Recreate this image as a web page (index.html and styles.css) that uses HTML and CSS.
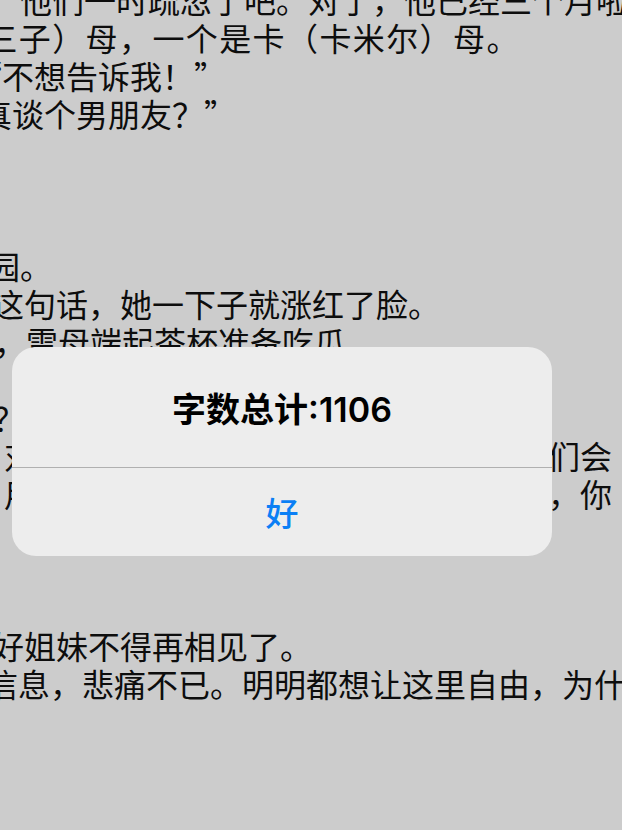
FILE: index.html
```html
<!DOCTYPE html>
<html lang="zh-CN">
<head>
<meta charset="utf-8">
<title>字数统计</title>
<link rel="stylesheet" href="styles.css">
</head>
<body>
<main class="reader">
  <p class="ln r0">“他们一时疏忽了吧。对了，他已经三个月啦</p>
  <p class="ln r1">雷三子）母，一个是卡（卡米尔）母。</p>
  <p class="ln r2">“不想告诉我！”</p>
  <p class="ln r3">真谈个男朋友？”</p>
  <p class="ln"></p>
  <p class="ln"></p>
  <p class="ln"></p>
  <p class="ln r7">花园。</p>
  <p class="ln r8">这句话，她一下子就涨红了脸。</p>
  <p class="ln r9">看到这里，雷母端起茶杯准备吃瓜</p>
  <p class="ln"></p>
  <p class="ln r11">怎么了？”雷母疑惑地问。</p>
  <p class="ln r12">对于这件事，大家心里其实都明白，他们会</p>
  <p class="ln r13">用不了多久，这里就会恢复原来的样子，你</p>
  <p class="ln"></p>
  <p class="ln"></p>
  <p class="ln"></p>
  <p class="ln r17">好姐妹不得再相见了。</p>
  <p class="ln r18">信息，悲痛不已。明明都想让这里自由，为什么</p>
</main>

<div class="alert" role="alertdialog">
  <div class="alert-title">字数总计:1106</div>
  <div class="alert-sep"></div>
  <button class="alert-btn">好</button>
</div>
</body>
</html>
```

FILE: styles.css
```css
html, body {
  margin: 0;
  padding: 0;
}

body {
  width: 622px;
  height: 830px;
  overflow: hidden;
  background: #cccccc;
  position: relative;
  font-family: "Noto Sans CJK SC", "Noto Sans", sans-serif;
}

.reader {
  margin-top: -20px;
  color: #0d0d0d;
  font-size: 32px;
}

.ln {
  margin: 0;
  height: 38px;
  line-height: 38px;
  white-space: nowrap;
}

.r0 { margin-left: -12px; }
.r1 { margin-left: -48px; letter-spacing: 1.4px; }
.r2 { margin-left: -30px; }
.r3 { margin-left: -20px; }
.r7 { margin-left: -44px; }
.r8 { margin-left: -8px; }
.r9 { margin-left: -134px; }
.r11 { margin-left: -103px; }
.r12 { margin-left: 4px; }
.r13 { margin-left: 4px; }
.r17 { margin-left: -8px; }
.r18 { margin-left: -14px; }

.alert {
  position: absolute;
  left: 12px;
  top: 347px;
  width: 540px;
  height: 209px;
  border-radius: 24px;
  background: #ededed;
  display: flex;
  flex-direction: column;
  overflow: hidden;
}

.alert-title {
  height: 120px;
  display: flex;
  align-items: center;
  justify-content: center;
  font-family: "Inter", "Noto Sans CJK SC", sans-serif;
  font-weight: 600;
  font-size: 34px;
  color: #000;
}

.alert-sep {
  height: 1px;
  background: #b0b0b0;
}

.alert-btn {
  flex: 1;
  border: 0;
  background: transparent;
  padding: 0;
  font-family: "Noto Sans CJK SC", sans-serif;
  font-weight: 500;
  font-size: 33px;
  color: #0b7ff5;
  display: flex;
  align-items: center;
  justify-content: center;
}
```
